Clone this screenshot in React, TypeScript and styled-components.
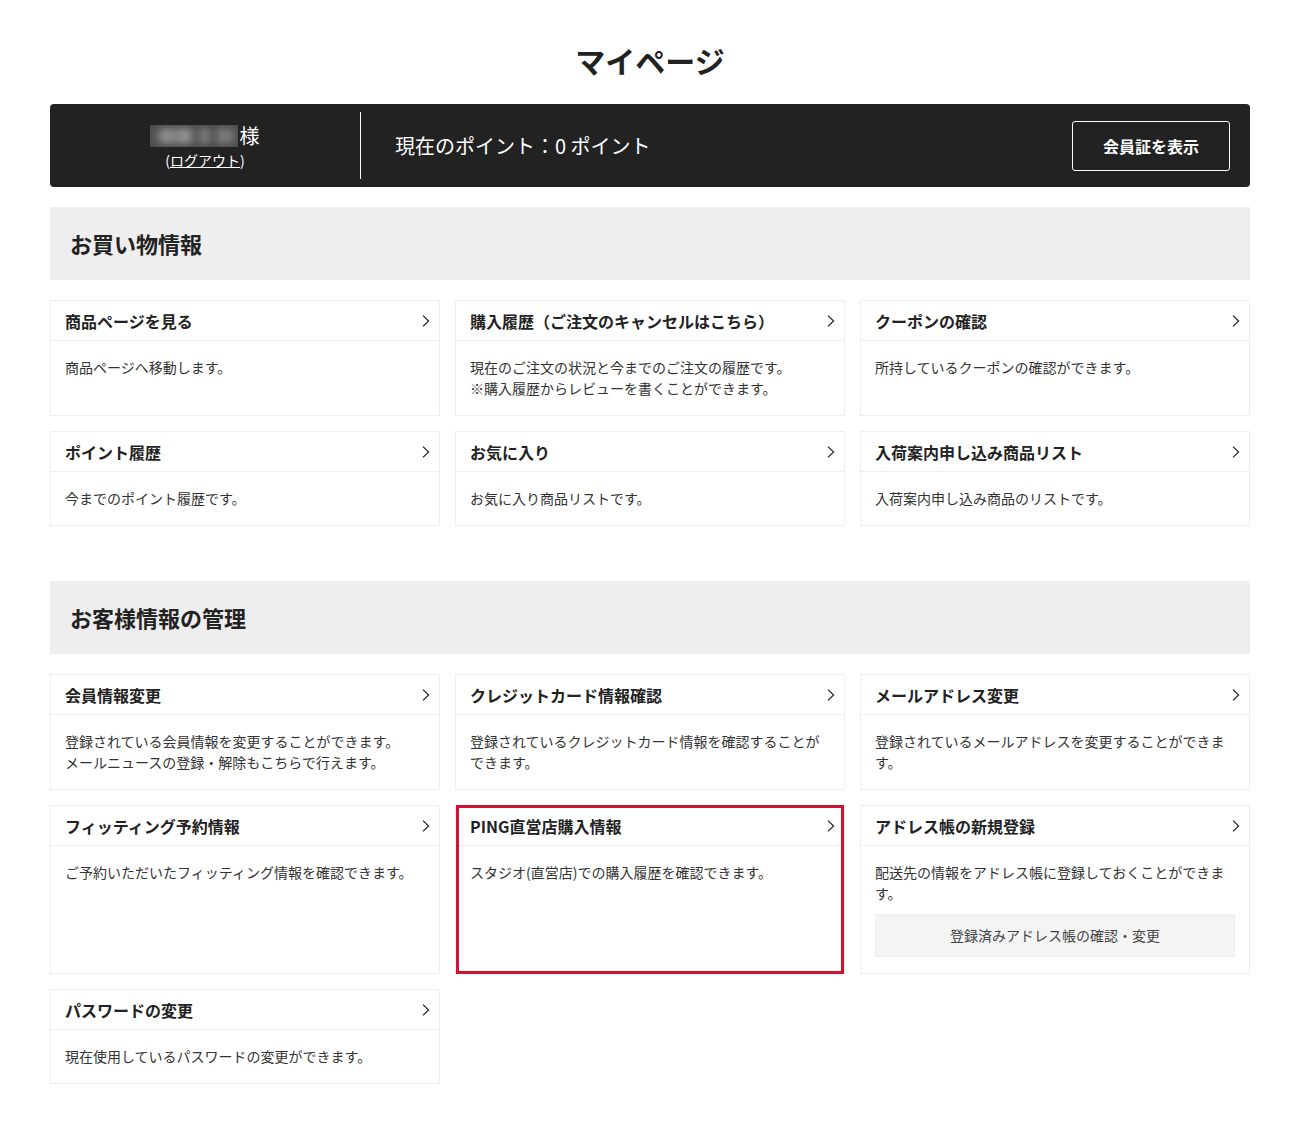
import React from "react";
import styled, { createGlobalStyle } from "styled-components";

const Global = createGlobalStyle`
  * { box-sizing: border-box; }
  html, body { margin: 0; padding: 0; background: #fff; }
  body { font-family: "Noto Sans CJK JP", "Noto Sans", sans-serif; color: #222; }
`;

const Page = styled.div`
  width: 1200px;
  margin: 0 auto;
  padding: 36px 0 50px;
`;

const Title = styled.h1`
  margin: 0 0 20px;
  font-size: 30px;
  line-height: 48px;
  font-weight: 700;
  text-align: center;
  color: #222;
`;

const MemberBar = styled.div`
  display: flex;
  align-items: center;
  height: 83px;
  padding: 8px 20px 8px 0;
  background: #222;
  border-radius: 4px;
  color: #fff;
  margin-bottom: 20px;
`;

const NameBlock = styled.div`
  width: 311px;
  height: 67px;
  flex: none;
  border-right: 1px solid #fff;
  text-align: center;
  padding-top: 10px;
  padding-right: 1px;
`;

const NameLine = styled.div`
  display: flex;
  justify-content: center;
  align-items: center;
  gap: 2px;
  font-size: 20px;
  line-height: 28px;
`;

const BlurredName = styled.span`
  display: block;
  position: relative;
  width: 88px;
  height: 22px;
  overflow: hidden;
  background: #4a4a4a;

  &::before {
    content: "";
    position: absolute;
    inset: 3px 0;
    filter: blur(3px);
    background: linear-gradient(90deg, #555 0 6%, #8c8c8c 16% 22%, #7a7a7a 28%, #8f8f8f 36% 44%, #4c4c4c 52%, #7d7d7d 60% 64%, #4c4c4c 71%, #7a7a7a 80% 88%, #555 100%);
  }
`;

const Logout = styled.div`
  font-size: 14px;
  line-height: 20px;
  padding-left: 1px;
  a { color: #fff; text-decoration: underline; }
`;

const Points = styled.div`
  flex: 1;
  padding-left: 34px;
  font-size: 20px;
  line-height: 30px;
`;

const CardButton = styled.a`
  display: flex;
  align-items: center;
  justify-content: center;
  width: 158px;
  height: 50px;
  border: 1px solid #fff;
  border-radius: 3px;
  color: #fff;
  font-size: 16px;
  font-weight: 700;
`;

const SectionHead = styled.h2`
  margin: 0 0 20px;
  height: 73px;
  padding: 0 20px 2px;
  display: flex;
  align-items: center;
  background: #eee;
  font-size: 22px;
  font-weight: 700;
  color: #222;
`;

const Grid = styled.div`
  display: grid;
  grid-template-columns: repeat(3, 390px);
  gap: 15px;
  margin-bottom: 55px;
`;

const Card = styled.a<{ $highlight?: boolean }>`
  display: block;
  position: relative;
  border: 1px solid #eee;
  color: #333;

  ${(p) =>
    p.$highlight &&
    `
    &::after {
      content: "";
      position: absolute;
      inset: -1px 0;
      border: 3px solid #cf1431;
      pointer-events: none;
    }
  `}
`;

const CardHead = styled.div`
  height: 40px;
  border-bottom: 1px solid #eee;
  display: flex;
  align-items: center;
  justify-content: space-between;
  padding: 0 9px 0 14px;
  font-size: 16px;
  font-weight: 700;
  color: #222;
`;

const Chevron = styled.svg`
  width: 8px;
  height: 12px;
  flex: none;
`;

const CardBody = styled.div`
  padding: 16px 14px 16px;
  font-size: 14px;
  line-height: 21px;
`;

const SubButton = styled.div`
  margin-top: 10px;
  height: 43px;
  display: flex;
  align-items: center;
  justify-content: center;
  background: #f4f4f4;
  border: 1px solid #eee;
  color: #444;
  font-size: 14px;
`;

type Item = { title: string; lines: string[]; highlight?: boolean; sub?: string };

const shopping: Item[] = [
  { title: "商品ページを見る", lines: ["商品ページへ移動します。"] },
  { title: "購入履歴（ご注文のキャンセルはこちら）", lines: ["現在のご注文の状況と今までのご注文の履歴です。", "※購入履歴からレビューを書くことができます。"] },
  { title: "クーポンの確認", lines: ["所持しているクーポンの確認ができます。"] },
  { title: "ポイント履歴", lines: ["今までのポイント履歴です。"] },
  { title: "お気に入り", lines: ["お気に入り商品リストです。"] },
  { title: "入荷案内申し込み商品リスト", lines: ["入荷案内申し込み商品のリストです。"] },
];

const customer: Item[] = [
  { title: "会員情報変更", lines: ["登録されている会員情報を変更することができます。", "メールニュースの登録・解除もこちらで行えます。"] },
  { title: "クレジットカード情報確認", lines: ["登録されているクレジットカード情報を確認することができます。"] },
  { title: "メールアドレス変更", lines: ["登録されているメールアドレスを変更することができます。"] },
  { title: "フィッティング予約情報", lines: ["ご予約いただいたフィッティング情報を確認できます。"] },
  { title: "PING直営店購入情報", lines: ["スタジオ(直営店)での購入履歴を確認できます。"], highlight: true },
  { title: "アドレス帳の新規登録", lines: ["配送先の情報をアドレス帳に登録しておくことができます。"], sub: "登録済みアドレス帳の確認・変更" },
  { title: "パスワードの変更", lines: ["現在使用しているパスワードの変更ができます。"] },
];

const LinkCard = ({ item }: { item: Item }) => (
  <Card $highlight={item.highlight}>
    <CardHead>
      <span>{item.title}</span>
      <Chevron viewBox="0 0 8 12" fill="none" stroke="#222" strokeWidth="1.2">
        <path d="M1 .6 6.6 6 1 11.4" />
      </Chevron>
    </CardHead>
    <CardBody>
      {item.lines.map((l) => (
        <div key={l}>{l}</div>
      ))}
      {item.sub && <SubButton>{item.sub}</SubButton>}
    </CardBody>
  </Card>
);

export default function App() {
  return (
    <Page>
      <Global />
      <Title>マイページ</Title>
      <MemberBar>
        <NameBlock>
          <NameLine>
            <BlurredName />
            <span>様</span>
          </NameLine>
          <Logout>
            (<a>ログアウト</a>)
          </Logout>
        </NameBlock>
        <Points>現在のポイント：0 ポイント</Points>
        <CardButton>会員証を表示</CardButton>
      </MemberBar>
      <SectionHead>お買い物情報</SectionHead>
      <Grid>
        {shopping.map((i) => (
          <LinkCard key={i.title} item={i} />
        ))}
      </Grid>
      <SectionHead>お客様情報の管理</SectionHead>
      <Grid>
        {customer.map((i) => (
          <LinkCard key={i.title} item={i} />
        ))}
      </Grid>
    </Page>
  );
}
